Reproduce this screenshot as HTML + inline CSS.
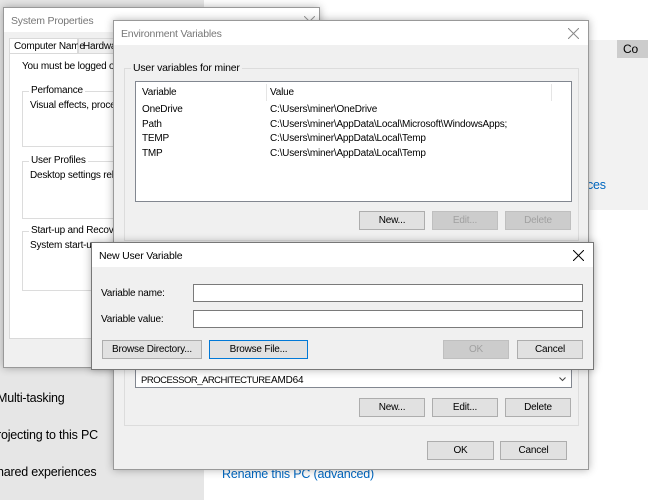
<!DOCTYPE html>
<html><head><meta charset="utf-8"><style>
*{box-sizing:border-box;margin:0;padding:0}
body{width:648px;height:500px;overflow:hidden;position:relative;background:#fff;font-family:"Liberation Sans",sans-serif;font-size:10px;letter-spacing:-0.2px;color:#000}
.a{position:absolute;white-space:nowrap}
.win{position:absolute;background:#f0f0f0;border:1px solid #999;box-shadow:0 0 8px rgba(0,0,0,.3)}
.title{position:absolute;left:0;top:0;right:0;height:24px;background:#fff;padding:7px 0 0 7px;font-size:10.5px}
.btn{position:absolute;height:19px;background:#e1e1e1;border:1px solid #adadad;text-align:center;line-height:17px}
.dis{color:#a0a0a0;border-color:#bfbfbf;background:#ccc}
.grp{position:absolute;border:1px solid #dcdcdc}
.grp span{position:absolute;top:-7px;left:6px;background:inherit;padding:0 2px}
.inp{position:absolute;height:18px;background:#fff;border:1px solid #7a7a7a}
.x{position:absolute;width:11px;height:11px}
</style></head><body>
<div class="a" style="left:0;top:0;width:204px;height:500px;background:#e6e6e6"></div>
<div class="a" style="left:588px;top:40px;width:60px;height:170px;background:#f2f2f2"></div>
<div class="a" style="left:617px;top:40px;width:31px;height:18px;background:#ccc;font-size:12px;padding:2px 0 0 6px">Co</div>
<div class="a" style="left:587px;top:178px;color:#0067c0;font-size:12.5px">ces</div>
<div class="a" style="left:-3px;top:391px;font-size:12.5px">Multi-tasking</div>
<div class="a" style="left:-3px;top:428px;font-size:12.5px">rojecting to this PC</div>
<div class="a" style="left:-3px;top:465px;font-size:12.5px">hared experiences</div>
<div class="a" style="left:222px;top:467px;font-size:12.5px;color:#0067c0">Rename this PC (advanced)</div>

<!-- System Properties -->
<div class="win" style="left:3px;top:7px;width:317px;height:361px">
<div class="title" style="color:#777">System Properties</div>
<svg class="x" style="left:300px;top:8px" viewBox="0 0 11 11"><path d="M0 0L11 11M11 0L0 11" stroke="#999" stroke-width="1"/></svg>
<div class="a" style="left:5px;top:30px;width:69px;height:16px;border:1px solid #d9d9d9;background:#fff;padding:2px 4px">Computer Name</div>
<div class="a" style="left:74px;top:30px;width:60px;height:16px;border:1px solid #d9d9d9;padding:2px 4px">Hardware</div>
<div class="a" style="left:5px;top:45px;width:310px;height:286px;background:#fff;border:1px solid #d9d9d9">
<div class="a" style="left:12px;top:7px">You must be logged on as</div>
<div class="grp" style="left:12px;top:37px;width:300px;height:56px;background:#fff"><span>Perfomance</span><div class="a" style="left:7px;top:8px">Visual effects, processor</div></div>
<div class="grp" style="left:12px;top:107px;width:300px;height:58px;background:#fff"><span>User Profiles</span><div class="a" style="left:7px;top:8px">Desktop settings related</div></div>
<div class="grp" style="left:12px;top:177px;width:300px;height:60px;background:#fff"><span>Start-up and Recovery</span><div class="a" style="left:7px;top:8px">System start-up, s</div></div>
</div>
</div>

<!-- Environment Variables -->
<div class="win" style="left:113px;top:20px;width:476px;height:450px">
<div class="title" style="color:#777">Environment Variables</div>
<svg class="x" style="left:454px;top:7px" viewBox="0 0 11 11"><path d="M0 0L11 11M11 0L0 11" stroke="#888" stroke-width="1"/></svg>
<div class="grp" style="left:10px;top:47px;width:455px;height:173px;background:#f0f0f0"><span style="font-size:10.5px">User variables for miner</span></div>
<div class="a" style="left:21px;top:60px;width:437px;height:121px;background:#fff;border:1px solid #828790">
<div class="a" style="left:6px;top:5px">Variable</div><div class="a" style="left:130px;top:2px;width:1px;height:17px;background:#e5e5e5"></div>
<div class="a" style="left:134px;top:5px">Value</div>
<div class="a" style="left:6px;top:21px;line-height:14.6px">OneDrive<br>Path<br>TEMP<br>TMP</div>
<div class="a" style="left:134px;top:21px;line-height:14.6px">C:\Users\miner\OneDrive<br>C:\Users\miner\AppData\Local\Microsoft\WindowsApps;<br>C:\Users\miner\AppData\Local\Temp<br>C:\Users\miner\AppData\Local\Temp</div>
<div class="a" style="left:415px;top:2px;width:1px;height:17px;background:#e5e5e5"></div>
</div>
<div class="btn" style="left:245px;top:190px;width:66px">New...</div>
<div class="btn dis" style="left:318px;top:190px;width:66px">Edit...</div>
<div class="btn dis" style="left:391px;top:190px;width:66px">Delete</div>
<div class="grp" style="left:10px;top:230px;width:455px;height:175px"></div>
<div class="a" style="left:21px;top:330px;width:437px;height:37px;background:#fff;border:1px solid #828790;border-top:none">
<div class="a" style="left:5px;top:24px;font-size:9.5px;letter-spacing:-0.5px">PROCESSOR_ARCHITECTURE</div>
<div class="a" style="left:135px;top:24px">AMD64</div>
<svg class="a" style="left:423px;top:26px" width="7" height="5" viewBox="0 0 7 5"><path d="M0.5 0.5L3.5 3.5L6.5 0.5" fill="none" stroke="#444"/></svg>
</div>
<div class="btn" style="left:245px;top:377px;width:66px">New...</div>
<div class="btn" style="left:318px;top:377px;width:66px">Edit...</div>
<div class="btn" style="left:391px;top:377px;width:66px">Delete</div>
<div class="btn" style="left:313px;top:420px;width:67px">OK</div>
<div class="btn" style="left:386px;top:420px;width:67px">Cancel</div>
</div>

<!-- New User Variable -->
<div class="win" style="left:91px;top:242px;width:503px;height:128px;border-color:#777">
<div class="title">New User Variable</div>
<svg class="x" style="left:481px;top:7px" viewBox="0 0 11 11"><path d="M0 0L11 11M11 0L0 11" stroke="#000" stroke-width="1"/></svg>
<div class="a" style="left:9px;top:45px">Variable name:</div>
<div class="a" style="left:9px;top:71px">Variable value:</div>
<div class="inp" style="left:101px;top:41px;width:390px"></div>
<div class="inp" style="left:101px;top:67px;width:390px"></div>
<div class="btn" style="left:10px;top:97px;width:100px">Browse Directory...</div>
<div class="btn" style="left:117px;top:97px;width:99px;border:1px solid #0078d7">Browse File...</div>
<div class="btn dis" style="left:351px;top:97px;width:66px">OK</div>
<div class="btn" style="left:425px;top:97px;width:66px">Cancel</div>
</div>
</body></html>
